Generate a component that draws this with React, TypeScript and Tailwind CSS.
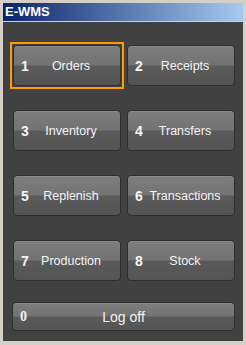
const items = [
	{ key: "1", label: "Orders", focused: true },
	{ key: "2", label: "Receipts" },
	{ key: "3", label: "Inventory" },
	{ key: "4", label: "Transfers" },
	{ key: "5", label: "Replenish" },
	{ key: "6", label: "Transactions" },
	{ key: "7", label: "Production" },
	{ key: "8", label: "Stock" },
];

function MenuButton({ num, label, focused }: { num: string; label: string; focused?: boolean }) {
	return (
		<button className="relative h-[41px] w-full rounded-[4px] border border-[#2e2e2e] bg-[linear-gradient(to_bottom,#7d7d7d_0%,#737373_48%,#5a5a5a_52%,#545454_100%)] text-[#f4f4f4] shadow-[inset_0_1px_0_#8a8a8a]">
			{/* focus rectangle */}
			{focused && <span className="absolute -inset-[4px] border-2 border-[#ff9a00]" />}
			<span className="absolute left-[7px] top-1/2 -translate-y-1/2 text-[14px] font-bold leading-none">
				{num}
			</span>
			<span className="block pl-2 pt-[2px] text-center text-[12.5px] leading-none">{label}</span>
		</button>
	);
}

export default function App() {
	return (
		<div
			className="flex h-[345px] w-[246px] flex-col bg-[#d4d0c8] px-[3px] pt-[3px] pb-[4px]"
			style={{ fontFamily: '"Liberation Sans", Arial, sans-serif' }}
		>
			{/* Title bar */}
			<div className="flex h-[18px] items-center bg-[linear-gradient(to_right,#0a246a,#a6caf0)] px-[2px] text-[13px] font-bold text-white">
				E-WMS
			</div>
			<div className="h-[1px]" />

			{/* Content */}
			<div className="flex flex-1 flex-col bg-[#414141] pl-[9px] pr-[8px] pt-[23px]">
				<div className="grid grid-cols-2 gap-x-[6px] gap-y-[24px] pl-[1px]">
					{items.map((it) => (
						<MenuButton key={it.key} num={it.key} label={it.label} focused={it.focused} />
					))}
				</div>
				<button className="relative mt-[21px] h-[29px] w-full rounded-[4px] border border-[#2e2e2e] bg-[linear-gradient(to_bottom,#7d7d7d_0%,#737373_48%,#5a5a5a_52%,#545454_100%)] text-[#f4f4f4] shadow-[inset_0_1px_0_#8a8a8a]">
					<span className="absolute left-[7px] top-1/2 -translate-y-1/2 font-['Liberation_Serif',serif] text-[14px] font-bold leading-none">
						0
					</span>
					<span className="block pt-[1px] text-center text-[14px] leading-none">Log off</span>
				</button>
			</div>
		</div>
	);
}
